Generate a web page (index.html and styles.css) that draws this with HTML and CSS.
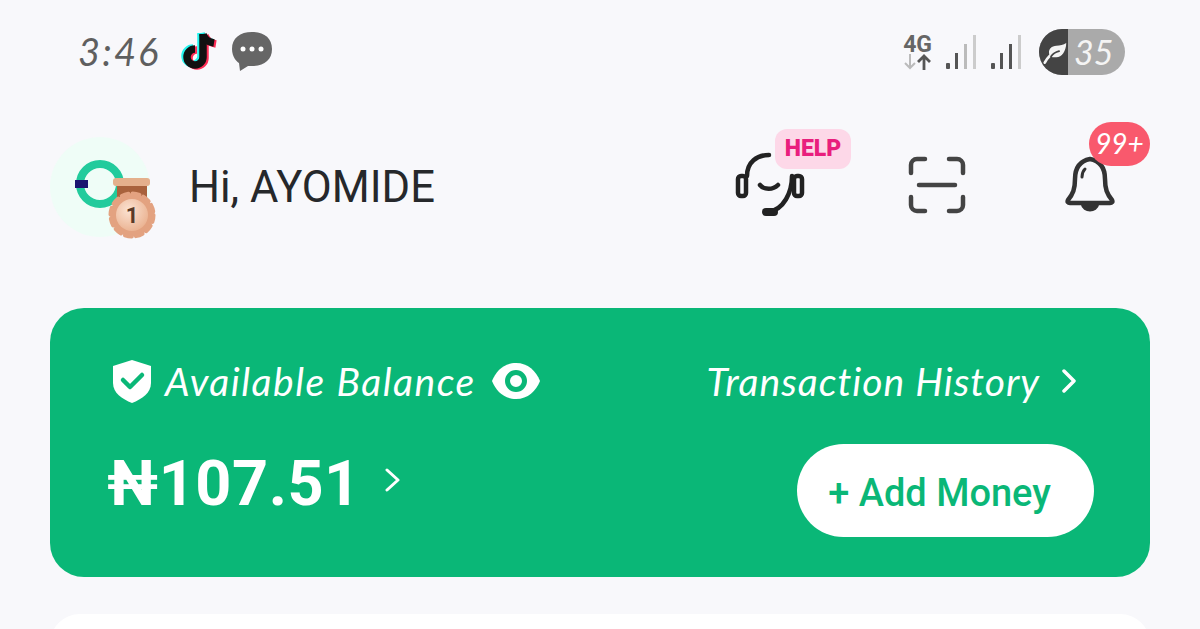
FILE: index.html
```html
<!DOCTYPE html>
<html lang="en">
<head>
<meta charset="utf-8">
<title>Wallet home</title>
<link rel="stylesheet" href="styles.css">
</head>
<body>
<div class="page">
  <div class="status">
    <div class="status-left">
      <span class="time">3:46</span>
      <svg class="tiktok" width="38" height="42" viewBox="0 0 38 42">
        <g fill="none" stroke-width="7.5">
          <path d="M22 4v23a8 8 0 1 1-8-8" stroke="#25f4ee" transform="translate(-2 -1)"/>
          <path d="M22 4c1 5 5 8 11 9" stroke="#25f4ee" transform="translate(-2 -1)"/>
          <path d="M22 4v23a8 8 0 1 1-8-8" stroke="#fe2c55" transform="translate(2 1)"/>
          <path d="M22 4c1 5 5 8 11 9" stroke="#fe2c55" transform="translate(2 1)"/>
          <path d="M22 4v23a8 8 0 1 1-8-8" stroke="#111"/>
          <path d="M22 4c1 5 5 8 11 9" stroke="#111"/>
        </g>
      </svg>
      <svg class="chat" width="40" height="39" viewBox="0 0 40 39">
        <path d="M20 0C8 0 0 6 0 17c0 8 5 13 7 14l1 8 8-5c2 0 3 0 4 0 12 0 20-6 20-17S32 0 20 0z" fill="#666"/>
        <circle cx="11" cy="17" r="2.5" fill="#fff"/><circle cx="20" cy="17" r="2.5" fill="#fff"/><circle cx="29" cy="17" r="2.5" fill="#fff"/>
      </svg>
    </div>
    <div class="status-right">
      <div class="net">
        <span class="net-label">4G</span>
        <svg width="29" height="16" viewBox="0 0 29 16" class="net-arrows">
          <path d="M7 0v14M2 9l5 5 5-5" fill="none" stroke="#bbb" stroke-width="2"/>
          <path d="M21 16V2M15 8l6-6 6 6" fill="none" stroke="#555" stroke-width="2.8"/>
        </svg>
      </div>
      <svg class="signal" width="32" height="34" viewBox="0 0 32 34">
        <rect x="1" y="28" width="4" height="6" rx="1" fill="#555"/>
        <rect x="10" y="18" width="3" height="16" fill="#555"/>
        <rect x="19" y="9" width="3" height="25" fill="#bbb"/>
        <rect x="28" y="0" width="3" height="34" fill="#ccc"/>
      </svg>
      <svg class="signal" width="32" height="34" viewBox="0 0 32 34">
        <rect x="1" y="28" width="4" height="6" rx="1" fill="#555"/>
        <rect x="10" y="18" width="3" height="16" fill="#555"/>
        <rect x="19" y="9" width="3" height="25" fill="#555"/>
        <rect x="28" y="0" width="3" height="34" fill="#ccc"/>
      </svg>
      <div class="battery">
        <span class="battery-fill">
          <svg width="28" height="28" viewBox="0 0 28 28">
            <path d="M8 19C4 11 10 7 15 7c4 0 8-1 11-3 0 9-5 16-11 16-3 0-5 0-7-1z" fill="#f4f4f4"/>
            <path d="M2 26c3-6 7-10 13-12" fill="none" stroke="#f4f4f4" stroke-width="3" stroke-linecap="round"/>
            <path d="M9 19c2-3 5-5 9-6" fill="none" stroke="#444" stroke-width="2" stroke-linecap="round"/>
          </svg>
        </span>
        <span class="battery-num">35</span>
      </div>
    </div>
  </div>

  <div class="header">
    <div class="avatar">
      <svg width="62" height="56" viewBox="0 0 62 56">
        <circle cx="31" cy="25" r="20" fill="none" stroke="#22cb9c" stroke-width="8"/>
        <rect x="6" y="21" width="13" height="8" fill="#1c1670"/>
      </svg>
      <svg class="medal" width="52" height="64" viewBox="0 0 52 64">
        <defs>
          <radialGradient id="medalFace" cx="0.4" cy="0.35" r="0.8">
            <stop offset="0" stop-color="#fbe3d3"/>
            <stop offset="1" stop-color="#e8aa86"/>
          </radialGradient>
        </defs>
        <rect x="10" y="8" width="30" height="12" fill="#a8623c"/>
        <rect x="6" y="1" width="37" height="8" rx="3" fill="#e4b08c"/>
        <circle cx="25" cy="38" r="21.5" fill="#e3a280" stroke="#e3a280" stroke-width="4" stroke-dasharray="7 4.25" stroke-linecap="round"/>
        <circle cx="25" cy="38" r="16" fill="url(#medalFace)"/>
        <text x="25" y="46" class="medal-num" text-anchor="middle">1</text>
      </svg>
    </div>
    <span class="greeting">Hi, AYOMIDE</span>
    <div class="actions">
      <div class="action action-help">
        <svg width="70" height="66" viewBox="0 0 70 66">
          <g fill="none" stroke="#222" stroke-width="4.5" stroke-linecap="round">
            <path d="M12 24C12 10 22 3 34 3"/>
            <path d="M57 24c0 16-8 34-24 36"/>
            <rect x="3" y="24" width="8" height="20" rx="3"/>
            <rect x="59" y="24" width="8" height="20" rx="3"/>
            <path d="M25 33c4 5 13 5 18 0"/>
          </g>
          <rect x="27" y="56" width="16" height="8" rx="4" fill="#222"/>
        </svg>
        <span class="help-badge">HELP</span>
      </div>
      <div class="action action-scan">
        <svg width="58" height="58" viewBox="0 0 58 58">
          <g fill="none" stroke="#444" stroke-width="4.5" stroke-linecap="round" stroke-linejoin="round">
            <path d="M3 17V9a6 6 0 0 1 6-6h8"/>
            <path d="M41 3h8a6 6 0 0 1 6 6v8"/>
            <path d="M3 41v8a6 6 0 0 0 6 6h8"/>
            <path d="M55 41v8a6 6 0 0 1-6 6h-8"/>
            <path d="M11 29h36"/>
          </g>
        </svg>
      </div>
      <div class="action action-bell">
        <svg width="50" height="60" viewBox="0 0 50 60">
          <g fill="none" stroke="#333" stroke-width="4.5" stroke-linecap="round" stroke-linejoin="round">
            <path d="M25 4c-10 2-15 9-15 20 0 10-2 15-7 21-1 2 0 3 2 3h40c2 0 3-1 2-3-5-6-7-11-7-21 0-11-5-18-15-20z"/>
            <path d="M18 49c1 7 13 7 14 0" fill="#333"/>
            <path d="M17 22c0-4 1-6 3-8" stroke-width="3"/>
          </g>
        </svg>
        <span class="count-badge">99+</span>
      </div>
    </div>
  </div>

  <div class="balance-card">
    <div class="balance-top">
      <div class="balance-label">
        <svg width="40" height="43" viewBox="0 0 40 43">
          <path d="M20 0l19 6v17c0 10-9 16-19 20C10 39 1 33 1 23V6z" fill="#fff"/>
          <path d="M11 20l7 7 12-12" fill="none" stroke="#0ab777" stroke-width="4.5" stroke-linecap="round" stroke-linejoin="round"/>
        </svg>
        <span class="hand-text label-text">Available Balance</span>
        <svg class="eye" width="48" height="36" viewBox="0 0 48 36">
          <path d="M24 0C12 0 4 8 0 18c4 10 12 18 24 18s20-8 24-18C44 8 36 0 24 0z" fill="#fff"/>
          <circle cx="24" cy="18" r="8.5" fill="none" stroke="#0ab777" stroke-width="5"/>
        </svg>
      </div>
      <div class="history">
        <span class="hand-text history-text">Transaction History</span>
        <svg width="16" height="24" viewBox="0 0 16 24"><path d="M3 2l10 10L3 22" fill="none" stroke="#fff" stroke-width="3.5" stroke-linecap="round" stroke-linejoin="round"/></svg>
      </div>
    </div>
    <div class="balance-bottom">
      <div class="amount-row">
        <span class="amount">₦107.51</span>
        <svg width="16" height="24" viewBox="0 0 16 24"><path d="M2 2l11 10L2 22" fill="none" stroke="#fff" stroke-width="3" stroke-linecap="round" stroke-linejoin="round"/></svg>
      </div>
      <button class="add-money">+ Add Money</button>
    </div>
  </div>

  <div class="next-card"></div>
</div>
</body>
</html>
```
FILE: styles.css
```css
* { box-sizing: border-box; }
html, body { margin: 0; height: 100%; }
body {
  background: #f8f8fb;
  font-family: Roboto, "Liberation Sans", sans-serif;
  overflow: hidden;
}
.page { padding: 0 50px; height: 629px; overflow: hidden; }

.status {
  height: 100px;
  display: flex;
  justify-content: space-between;
  align-items: center;
  padding: 4px 25px 0 28px;
}
.status-left, .status-right { display: flex; align-items: center; }
.status-left { margin-top: -2px; }
.time {
  font-family: "Lato", sans-serif;
  font-style: italic;
  font-size: 38px;
  color: #5f5f5f;
  width: 103px;
  letter-spacing: 2.2px;
}
.tiktok { margin-right: 13px; }
.net { display: flex; flex-direction: column; align-items: flex-end; width: 29px; margin-right: 13px; }
.net-label { font-size: 23px; line-height: 19px; font-weight: 700; color: #666; }
.net-arrows { display: block; }
.signal { margin-right: 13px; }
.signal + .battery { margin-left: 4px; }
.battery {
  display: flex;
  width: 86px;
  height: 46px;
  border-radius: 23px;
  overflow: hidden;
  background: #aaa;
}
.battery-fill {
  width: 29px;
  background: #444;
  display: flex;
  align-items: center;
  padding-left: 4px;
  flex: none;
}
.battery-num {
  font-family: "Lato", sans-serif;
  font-style: italic;
  font-size: 34px;
  line-height: 46px;
  color: #f4f4f4;
  padding-left: 6px;
}

.header {
  height: 100px;
  margin-top: 37px;
  display: flex;
  align-items: center;
}
.avatar {
  width: 100px;
  height: 100px;
  border-radius: 50%;
  background: #effdf7;
  position: relative;
  display: flex;
  align-items: center;
  justify-content: center;
  flex: none;
}
.medal { position: absolute; left: 57px; top: 40px; }
.medal-num { font: 700 22px Roboto, sans-serif; fill: #5a3a28; }
.greeting {
  margin-left: 39px;
  font-size: 43.5px;
  color: #26282b;
}
.actions { margin-left: auto; display: flex; align-items: center; }
.action { position: relative; display: flex; }
.action-help { margin-top: -4px; margin-right: 103px; }
.action-scan { margin-right: 99px; margin-top: -4px; }
.action-bell { margin-right: 35px; margin-top: -5px; }
.help-badge {
  position: absolute;
  left: 40px;
  top: -23px;
  width: 76px;
  height: 40px;
  border-radius: 12px;
  background: #fdd8e8;
  color: #e91e7d;
  font-weight: 900;
  font-size: 23px;
  line-height: 40px;
  text-align: center;
}
.count-badge {
  position: absolute;
  left: 24px;
  top: -33px;
  width: 61px;
  height: 44px;
  border-radius: 22px;
  background: #f9596d;
  color: #fff;
  font-family: "Lato", sans-serif;
  font-style: italic;
  font-size: 28px;
  line-height: 42px;
  text-align: center;
}

.balance-card {
  margin-top: 71px;
  height: 269px;
  border-radius: 34px;
  background: #0ab777;
  padding: 50px 56px 0 62px;
  color: #fff;
}
.balance-top {
  display: flex;
  justify-content: space-between;
  align-items: center;
  padding-right: 17px;
  height: 46px;
}
.balance-label, .history { display: flex; align-items: center; }
.hand-text {
  font-family: "Lato", sans-serif;
  font-style: italic;
  font-weight: 400;
}
.label-text { font-size: 39px; margin-left: 13px; letter-spacing: 1.55px; }
.eye { margin-left: 16px; }
.history-text { font-size: 39px; margin-right: 21px; letter-spacing: 1px; }
.balance-bottom {
  display: flex;
  justify-content: space-between;
  align-items: center;
  margin-top: 40px;
}
.amount-row { display: flex; align-items: center; margin-left: -5px; margin-top: -14px; }
.amount { font-size: 63px; font-weight: 700; letter-spacing: 0.5px; line-height: 70px; }
.amount-row svg { margin-left: 24px; margin-top: -8px; }
.add-money {
  width: 297px;
  height: 93px;
  border: 0;
  border-radius: 47px;
  background: #fff;
  color: #0ab777;
  font-family: Roboto, sans-serif;
  font-weight: 500;
  font-size: 38px;
  padding: 4px 12px 0 0;
}
.next-card {
  margin-top: 37px;
  height: 60px;
  border-radius: 34px;
  background: #fff;
}
```
